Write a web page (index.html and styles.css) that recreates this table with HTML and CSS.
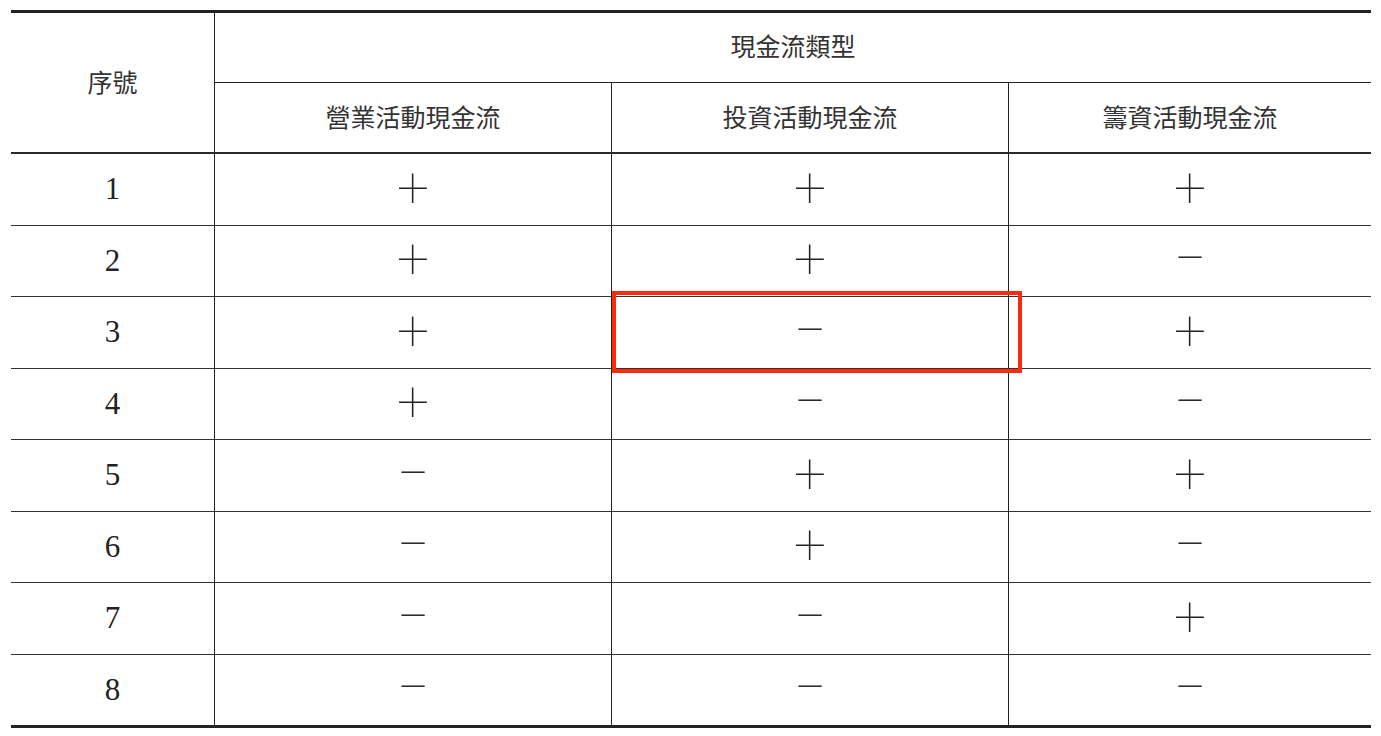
FILE: index.html
```html
<!DOCTYPE html>
<html lang="zh-Hant">
<head>
<meta charset="utf-8">
<title>現金流類型</title>
<link rel="stylesheet" href="styles.css">
</head>
<body>
<div class="wrap">
  <table class="cf">
    <colgroup>
      <col class="c-no">
      <col class="c-a">
      <col class="c-b">
      <col class="c-c">
    </colgroup>
    <thead>
      <tr class="h1">
        <th rowspan="2" class="no-head">序號</th>
        <th colspan="3" class="group">現金流類型</th>
      </tr>
      <tr class="h2">
        <th class="sub">營業活動現金流</th>
        <th class="sub">投資活動現金流</th>
        <th class="sub">籌資活動現金流</th>
      </tr>
    </thead>
    <tbody>
      <tr><td class="no">1</td><td><span class="sign">+</span></td><td><span class="sign">+</span></td><td><span class="sign">+</span></td></tr>
      <tr><td class="no">2</td><td><span class="sign">+</span></td><td><span class="sign">+</span></td><td><span class="sign">−</span></td></tr>
      <tr><td class="no">3</td><td><span class="sign">+</span></td><td><span class="sign">−</span></td><td><span class="sign">+</span></td></tr>
      <tr><td class="no">4</td><td><span class="sign">+</span></td><td><span class="sign">−</span></td><td><span class="sign">−</span></td></tr>
      <tr><td class="no">5</td><td><span class="sign">−</span></td><td><span class="sign">+</span></td><td><span class="sign">+</span></td></tr>
      <tr><td class="no">6</td><td><span class="sign">−</span></td><td><span class="sign">+</span></td><td><span class="sign">−</span></td></tr>
      <tr><td class="no">7</td><td><span class="sign">−</span></td><td><span class="sign">−</span></td><td><span class="sign">+</span></td></tr>
      <tr class="last"><td class="no">8</td><td><span class="sign">−</span></td><td><span class="sign">−</span></td><td><span class="sign">−</span></td></tr>
    </tbody>
  </table>
  <div class="highlight"></div>
</div>
</body>
</html>
```

FILE: styles.css
```css
html, body {
  margin: 0;
  padding: 0;
  background: #ffffff;
}

.wrap {
  position: relative;
  width: 1360px;
  margin: 10px 0 0 11px;
}

.cf {
  width: 1360px;
  table-layout: fixed;
  border-collapse: separate;
  border-spacing: 0;
  border-top: 3px solid #222;
  border-bottom: 3px solid #222;
}

.c-no { width: 203px; }
.c-a { width: 397px; }
.c-b { width: 397px; }
.c-c { width: 363px; }

.cf th,
.cf td {
  padding: 0;
  text-align: center;
  vertical-align: middle;
  box-sizing: border-box;
}

.cf th {
  font-family: "Noto Sans CJK TC", "Noto Sans CJK SC", sans-serif;
  font-weight: 400;
  font-size: 25px;
  line-height: 30px;
  color: #333;
}

.h1 th { height: 70px; }
.h2 th { height: 71px; }

.no-head {
  border-bottom: 2px solid #2a2a2a;
  padding-bottom: 4px !important;
}

.group {
  border-left: 1px solid #222;
  border-bottom: 1px solid #222;
  padding-bottom: 5px !important;
}

.sub {
  border-left: 1px solid #222;
  border-bottom: 2px solid #2a2a2a;
  padding-bottom: 3px !important;
}

.cf td {
  height: 71.5px;
  border-bottom: 1px solid #333;
  border-left: 1px solid #222;
}

.cf td.no {
  border-left: none;
  font-family: "Liberation Serif", "Times New Roman", serif;
  font-size: 31px;
  line-height: 32px;
  color: #222;
}

.cf tr.last td {
  height: 70px;
  border-bottom: none;
}

.sign {
  display: inline-block;
  font-family: Roboto, "Liberation Sans", sans-serif;
  font-weight: 100;
  font-size: 57px;
  line-height: 40px;
  color: #222;
}

.highlight {
  position: absolute;
  left: 601px;
  top: 281px;
  width: 410px;
  height: 82px;
  box-sizing: border-box;
  border: 4px solid #ff2a0c;
  pointer-events: none;
}
```
